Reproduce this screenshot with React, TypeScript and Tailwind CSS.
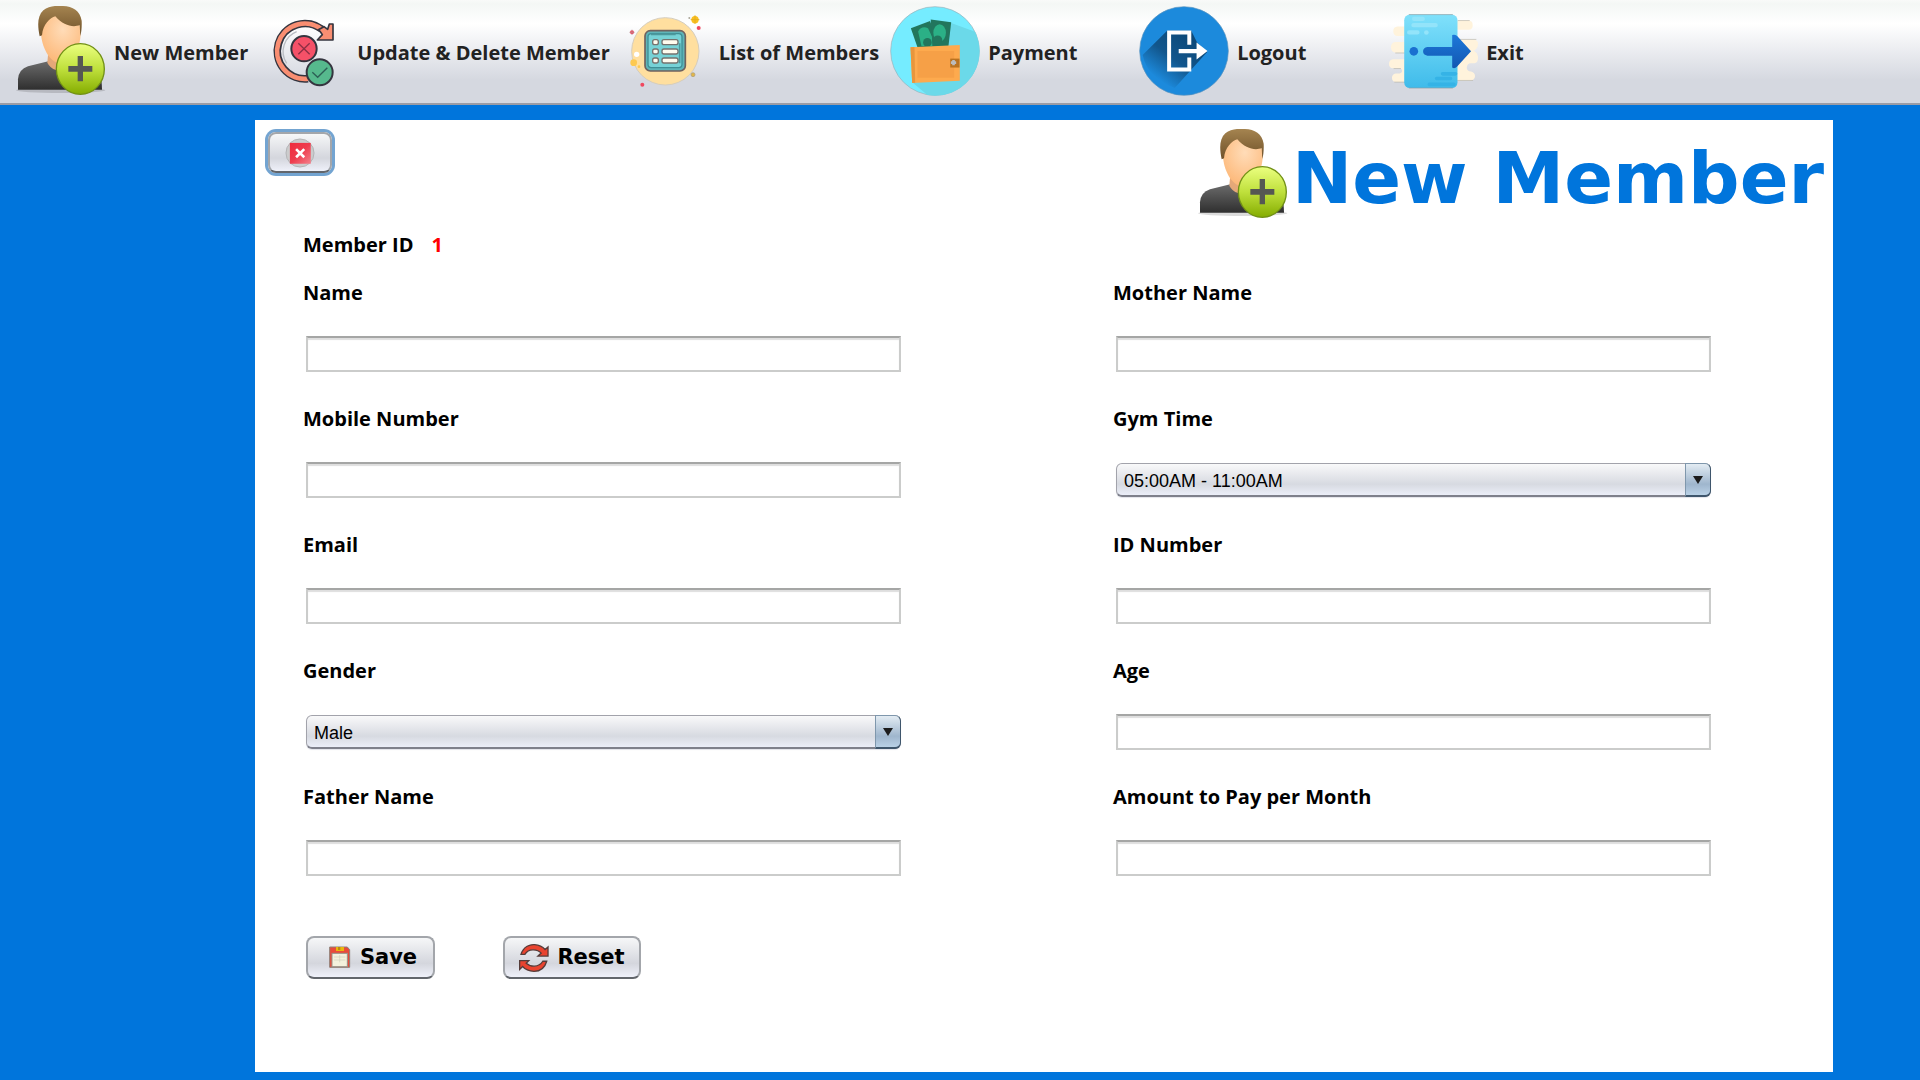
import type { ReactNode } from "react";

function UserAddIcon({ id }: { id: string }) {
  return (
    <svg viewBox="48 18 270 270" className="size-[90px] shrink-0" aria-hidden="true">
      <defs>
        <linearGradient id={`${id}-hair`} x1="0" y1="0" x2="0" y2="1">
          <stop offset="0" stopColor="#a58450" />
          <stop offset="1" stopColor="#6f5129" />
        </linearGradient>
        <radialGradient id={`${id}-face`} cx="0.55" cy="0.3" r="0.7">
          <stop offset="0" stopColor="#ffdcb8" />
          <stop offset="1" stopColor="#fdb878" />
        </radialGradient>
        <linearGradient id={`${id}-body`} x1="0" y1="0" x2="0" y2="1">
          <stop offset="0" stopColor="#6b6b6b" />
          <stop offset="1" stopColor="#2f2f2f" />
        </linearGradient>
        <linearGradient id={`${id}-badge`} x1="0" y1="0" x2="0" y2="1">
          <stop offset="0" stopColor="#ebff80" />
          <stop offset="0.5" stopColor="#bfe03c" />
          <stop offset="1" stopColor="#84ac00" />
        </linearGradient>
      </defs>
      <ellipse cx="182" cy="271" rx="134" ry="8" fill="#000" opacity="0.14" />
      <path d="M54 269V238Q56 208 84 199L145 184H225L285 199Q305 210 306 269Z" fill={`url(#${id}-body)`} />
      <path d="M144 165H215V198Q190 215 168 210Q150 204 142 188Z" fill="#e5a878" />
      <path d="M123 95C123 60 145 45 181 45C220 45 242 60 242 98C242 145 215 190 182 190C150 190 123 140 123 95Z" fill={`url(#${id}-face)`} />
      <path d="M119 109C112 75 112 48 130 31C145 18 165 17 182 18C215 17 240 30 245 62C246 80 244 98 241 108C240 95 240 85 239 76C218 82 190 78 166 49C150 54 129 72 126 106Z" fill={`url(#${id}-hair)`} />
      <ellipse cx="241" cy="207" rx="72" ry="76" fill={`url(#${id}-badge)`} stroke="#719016" strokeWidth="4" />
      <path d="M233 168H249V198H277V215H249V244H233V215H205V198H233Z" fill="#555753" />
    </svg>
  );
}

function UpdateIcon() {
  return (
    <svg viewBox="777 18 270 270" className="size-[90px] shrink-0" aria-hidden="true">
      <path d="M848 190A76 76 0 0 1 955 90" fill="none" stroke="#8a8f98" strokeWidth="4" strokeDasharray="70 8 40 8" />
      <path d="M860 190A64 64 0 0 1 890 95" fill="none" stroke="#b9bcc2" strokeWidth="4" />
      <path d="M924 236A83 83 0 1 1 966 88" fill="none" stroke="#35353f" strokeWidth="23" />
      <path d="M924 236A83 83 0 1 1 970 92" fill="none" stroke="#f98e72" strokeWidth="14" />
      <path d="M999 72V120H952L967 104Q962 95 955 89L972 80L983 88L988 72Z" fill="#f98e72" stroke="#35353f" strokeWidth="5" strokeLinejoin="round" />
      <circle cx="912" cy="146" r="38" fill="#f55168" stroke="#35353f" strokeWidth="6" />
      <path d="M895 130L929 163M929 130L895 163" stroke="#8c2f44" strokeWidth="4" />
      <circle cx="959" cy="217" r="39" fill="#56b98d" stroke="#35353f" strokeWidth="6" />
      <path d="M937 217L953 232L982 203" fill="none" stroke="#2c5f55" strokeWidth="4" />
    </svg>
  );
}

function ListIcon() {
  return (
    <svg viewBox="846 18 270 270" className="size-[90px] shrink-0" aria-hidden="true">
      <circle cx="979" cy="154" r="101" fill="#ffdf9f" stroke="#d5cdbd" strokeWidth="3" />
      <rect x="918" y="92" width="121" height="121" rx="16" fill="#5fb4b8" stroke="#6f625f" strokeWidth="5" />
      <rect x="927" y="101" width="102" height="102" rx="10" fill="#77d2d6" stroke="#3f8f96" strokeWidth="4" />
      <path d="M936 103H1010M1022 130V190" stroke="#4c999d" strokeWidth="5" />
      <g fill="#fffbee" stroke="#75736f" strokeWidth="4">
        <rect x="941" y="119" width="17" height="15" rx="6" />
        <rect x="969" y="119" width="48" height="15" rx="6" />
        <rect x="941" y="147" width="17" height="15" rx="6" />
        <rect x="969" y="147" width="48" height="15" rx="6" />
        <rect x="941" y="174" width="17" height="15" rx="6" />
        <rect x="969" y="174" width="48" height="15" rx="6" />
      </g>
      <circle cx="1068" cy="59" r="11" fill="#f9bf21" />
      <path d="M1068 46V72M1055 59H1081" stroke="#e5ae1e" strokeWidth="3" />
      <circle cx="1051" cy="54" r="3" fill="#aaa79a" />
      <circle cx="1079" cy="84" r="6" fill="#f0485f" />
      <circle cx="879" cy="97" r="6" fill="#f0485f" />
      <path d="M871 97H887M879 89V105" stroke="#b88a90" strokeWidth="2" />
      <circle cx="893" cy="163" r="8" fill="#fff" />
      <circle cx="884" cy="188" r="10" fill="#fdc94f" />
      <circle cx="900" cy="200" r="4" fill="#fdc94f" />
      <circle cx="1062" cy="224" r="6" fill="#e2b64a" stroke="#a79b78" strokeWidth="2" />
      <circle cx="910" cy="254" r="6" fill="#f0485f" />
    </svg>
  );
}

function PaymentIcon() {
  return (
    <svg viewBox="567 18 272 270" className="size-[90px] shrink-0" aria-hidden="true">
      <circle cx="703" cy="153" r="134" fill="#75ecff" stroke="#9ab0b8" strokeWidth="2" />
      <path d="M752 68L824 95A134 134 0 0 1 680 286L636 249Z" fill="#6bd9e9" />
      <path d="M630 84L688 62L720 142H650Z" fill="#22765d" />
      <path d="M652 94Q662 76 682 84L694 110L696 138H662Z" fill="#2bb086" />
      <path d="M690 58L752 66L743 144H696Z" fill="#22765d" />
      <ellipse cx="717" cy="98" rx="19" ry="26" fill="#2bb086" />
      <circle cx="680" cy="127" r="13" fill="#22765d" />
      <circle cx="711" cy="120" r="14" fill="#22765d" />
      <path d="M629 142L778 135V243L634 250Z" fill="#fdaa4e" />
      <path d="M629 142L641 141L643 249L634 250Z" fill="#e8963c" />
      <path d="M650 153H761V234H650Z" fill="#f6a047" />
      <rect x="749" y="176" width="28" height="27" fill="#b97220" />
      <path d="M751 188H767M759 180V196" stroke="#bcbcbc" strokeWidth="8" />
    </svg>
  );
}

function LogoutIcon() {
  return (
    <svg viewBox="114 18 272 270" className="size-[90px] shrink-0" aria-hidden="true">
      <defs>
        <linearGradient id="logout-shade" x1="0.8" y1="0.2" x2="0.25" y2="0.85">
          <stop offset="0" stopColor="#0d4a7a" />
          <stop offset="0.5" stopColor="#12568c" />
          <stop offset="1" stopColor="#1c8adc" />
        </linearGradient>
      </defs>
      <circle cx="250" cy="153" r="134" fill="#1c8adc" stroke="#5b93bd" strokeWidth="2" />
      <path d="M199 92L125 165Q140 235 222 265L320 156L290 128L272 92Z" fill="url(#logout-shade)" />
      <path d="M266 134V97H205V209H266V173" fill="none" stroke="#fff" strokeWidth="12" />
      <path d="M234 147H288V127L321 153L288 179V160H234Z" fill="#fff" />
    </svg>
  );
}

function ExitIcon() {
  return (
    <svg viewBox="861 18 272 270" className="size-[90px] shrink-0" aria-hidden="true">
      <defs>
        <linearGradient id="exit-door" x1="0" y1="0" x2="0" y2="1">
          <stop offset="0" stopColor="#80e1fb" />
          <stop offset="1" stopColor="#3fbbea" />
        </linearGradient>
        <linearGradient id="exit-arrow" x1="0" y1="0" x2="0" y2="1">
          <stop offset="0" stopColor="#1d78d9" />
          <stop offset="1" stopColor="#1257b2" />
        </linearGradient>
      </defs>
      <g fill="#fff3dc">
        <path d="M920 79H890Q877 80 877 93Q877 107 890 108H920V126H883Q870 128 870 142Q870 157 883 158H920V178H876Q864 180 864 192Q864 204 876 205H896Q904 207 904 213Q904 220 896 221H884Q873 223 873 234Q873 246 884 247H920Z" />
        <path d="M1060 61H1105Q1117 62 1117 75Q1117 88 1105 89H1060ZM1060 119H1122Q1133 120 1133 132Q1133 146 1120 152Q1133 158 1133 174Q1133 188 1122 190H1108Q1099 194 1099 204Q1100 213 1112 215Q1124 218 1124 229Q1123 241 1110 242H1060Z" />
      </g>
      <path d="M880 247H912M883 159H912M878 206H900M1070 242H1118M1070 118H1128M1072 61H1108" stroke="#b9b4aa" strokeWidth="2" />
      <rect x="910" y="43" width="161" height="222" rx="17" fill="url(#exit-door)" />
      <path d="M924 43H1057M924 265H1057" stroke="#8a9ca4" strokeWidth="2" />
      <path d="M940 56H966M938 75H1005M925 97H950" stroke="#93e4fa" strokeWidth="13" strokeLinecap="round" />
      <circle cx="977" cy="97" r="7" fill="#93e4fa" />
      <path d="M1026 222H1065M1008 236H1050M986 254H1060" stroke="#35b3e6" strokeWidth="11" strokeLinecap="round" />
      <circle cx="939" cy="154" r="13" fill="#1a70d0" />
      <path d="M980 141H1055V105Q1062 101 1070 108L1112 154L1070 200Q1062 208 1055 203V167H980Q967 165 967 154Q967 143 980 141Z" fill="url(#exit-arrow)" />
    </svg>
  );
}

function CloseIcon() {
  return (
    <svg viewBox="0 0 90 92" className="size-[30px]" aria-hidden="true">
      <defs>
        <linearGradient id="close-red" x1="0" y1="0" x2="1" y2="1">
          <stop offset="0" stopColor="#ef2b3c" />
          <stop offset="0.5" stopColor="#ee3d4e" />
          <stop offset="1" stopColor="#f4808b" />
        </linearGradient>
      </defs>
      <circle cx="45" cy="46" r="43" fill="#cbcccd" stroke="#b2b3b5" strokeWidth="3" />
      <rect x="14" y="15" width="64" height="64" fill="url(#close-red)" />
      <path d="M33 34L58 59M58 34L33 59" stroke="#fff" strokeWidth="8" />
    </svg>
  );
}

function SaveIcon() {
  return (
    <svg viewBox="114 130 72 90" className="h-[30px] w-6" aria-hidden="true">
      <path d="M119 142H172L179 150V203H119Z" fill="#e94b3a" stroke="#8f8178" strokeWidth="3" />
      <rect x="138" y="142" width="24" height="12" fill="#e9b60c" />
      <rect x="144" y="142" width="7" height="9" fill="#b98a10" />
      <rect x="126" y="161" width="46" height="40" fill="#f4f1dc" stroke="#96958a" strokeWidth="3" />
      <path d="M132 172H166M132 181H166M149 166V188" stroke="#d2d1bd" strokeWidth="2" />
    </svg>
  );
}

function ResetIcon() {
  return (
    <svg viewBox="692 126 92 90" className="size-[30px]" aria-hidden="true">
      <path d="M698 160C706 134 727 129 740 130C755 131 765 137 772 145L781 137V165H750L760 156C750 145 722 139 710 160Z" fill="#e9432f" stroke="#553c3a" strokeWidth="4" />
      <path d="M777 181C770 206 752 212 738 212C722 211 711 206 703 197L694 206V179H722L714 187C726 198 752 202 765 181Z" fill="#e9432f" stroke="#553c3a" strokeWidth="4" />
    </svg>
  );
}

const labelText = 'font-["Open_Sans",sans-serif] text-[20px] leading-7 font-bold';

const menu: { label: string; icon: ReactNode; width: string }[] = [
  { label: "New Member", icon: <UserAddIcon id="menu-user" />, width: "min-w-0" },
  { label: "Update & Delete Member", icon: <UpdateIcon />, width: "min-w-0" },
  { label: "List of Members", icon: <ListIcon />, width: "min-w-0" },
  { label: "Payment", icon: <PaymentIcon />, width: "min-w-[238px]" },
  { label: "Logout", icon: <LogoutIcon />, width: "min-w-[238px]" },
  { label: "Exit", icon: <ExitIcon />, width: "min-w-0" },
];

type FieldProps = { id: string; label: string; options?: string[] };

function Field({ id, label, options }: FieldProps) {
  return (
    <div className="flex flex-col gap-[29px]">
      <label htmlFor={id} className={`${labelText} self-start text-black`}>
        {label}
      </label>
      <div className="relative flex h-9 items-center pl-[3px]">
        {options ? (
          <>
            <select
              id={id}
              className="h-[34px] w-full appearance-none rounded-md border border-b-2 border-[#a2a3ab] border-b-[#7e808b] bg-linear-to-b from-[#f9f9fa] via-[#d7dae1] via-65% to-[#ebeef8] pt-1 pl-[7px] font-['Liberation_Sans',Arial,sans-serif] text-[18px] text-black shadow-[0_1px_1px_#e3e4ea]"
            >
              {options.map((option) => (
                <option key={option}>{option}</option>
              ))}
            </select>
            <span className="pointer-events-none absolute top-px right-0 flex h-[34px] w-[26px] items-center justify-center rounded-r-md border border-b-2 border-[#7f97ac] border-r-[#3f566c] border-b-[#3f566c] bg-linear-to-b from-[#e3ecf3] via-[#9fb6cd] via-65% to-[#b9d1e6]">
              <svg viewBox="0 0 10 8" className="h-2 w-[10px]" aria-hidden="true">
                <path d="M0 0H10L5 8Z" fill="#1c1c1c" />
              </svg>
            </span>
          </>
        ) : (
          <input
            id={id}
            type="text"
            className="h-9 w-full border-2 border-[#cbcccb] border-t-[#a5a6a5] bg-white px-2 font-['Liberation_Sans',Arial,sans-serif] text-[18px] text-black shadow-[inset_0_2px_1px_#dedede]"
          />
        )}
      </div>
    </div>
  );
}

const fields: FieldProps[] = [
  { id: "name", label: "Name" },
  { id: "mother-name", label: "Mother Name" },
  { id: "mobile", label: "Mobile Number" },
  { id: "gym-time", label: "Gym Time", options: ["05:00AM - 11:00AM", "05:00PM - 11:00PM"] },
  { id: "email", label: "Email" },
  { id: "id-number", label: "ID Number" },
  { id: "gender", label: "Gender", options: ["Male", "Female"] },
  { id: "age", label: "Age" },
  { id: "father-name", label: "Father Name" },
  { id: "amount", label: "Amount to Pay per Month" },
];

const metal =
  "flex items-center justify-center rounded-lg border-2 border-[#a3a6ab] border-b-[#62666c] bg-linear-to-b from-[#f6f7f8] via-[#d4d6dd] via-65% to-[#eff1fa]";

export default function App() {
  return (
    <div className="flex min-h-screen flex-col bg-[#0075dc]">
      <header className="border-b-2 border-[#9a9ca6] bg-[linear-gradient(#f9faf9_0px,#f4f7f5_4px,#ffffff_24px,#d5d8e0_80px,#d5d8e0_103px)]">
        <nav className="flex gap-[11px] pt-[6px] pb-[7px] pl-4">
          {menu.map((item) => (
            <button
              key={item.label}
              type="button"
              className={`${labelText} ${item.width} flex items-center gap-2 text-left whitespace-nowrap text-[#222222]`}
            >
              {item.icon}
              <span className="pt-[3px]">{item.label}</span>
            </button>
          ))}
        </nav>
      </header>

      <main className="mt-[15px] mr-[87px] mb-2 ml-[255px] flex-1 bg-white">
        <div className="flex items-start justify-between pt-2 pr-[9px] pl-[13px]">
          <button
            type="button"
            aria-label="Close"
            className={`${metal} mt-1 h-[41px] w-16 ring-3 ring-[#73a4d1]`}
          >
            <CloseIcon />
          </button>
          <div className="flex items-center gap-1">
            <UserAddIcon id="title-user" />
            <h1 className='pt-2 font-["DejaVu_Sans",Verdana,sans-serif] text-[72px] leading-[84px] font-bold whitespace-nowrap text-[#0075dc]'>
              New Member
            </h1>
          </div>
        </div>

        <form className="pr-[122px] pl-12">
          <p className={`${labelText} mt-[11px] flex gap-[18px] text-black`}>
            <span>Member ID</span>
            <output className="text-[#ff0000]">1</output>
          </p>
          <div className="mt-5 grid grid-cols-2 gap-x-[212px] gap-y-[33px]">
            {fields.map((field) => (
              <Field key={field.id} {...field} />
            ))}
          </div>
          <div className='mt-[60px] flex gap-[68px] pl-[3px] font-["DejaVu_Sans",Verdana,sans-serif] text-[21px] font-bold text-black'>
            <button type="button" className={`${metal} h-[43px] w-[129px] gap-2 pl-1`}>
              <SaveIcon />
              <span className="pt-px">Save</span>
            </button>
            <button type="reset" className={`${metal} h-[43px] w-[138px] gap-2`}>
              <ResetIcon />
              <span className="pt-px">Reset</span>
            </button>
          </div>
        </form>
      </main>
    </div>
  );
}
